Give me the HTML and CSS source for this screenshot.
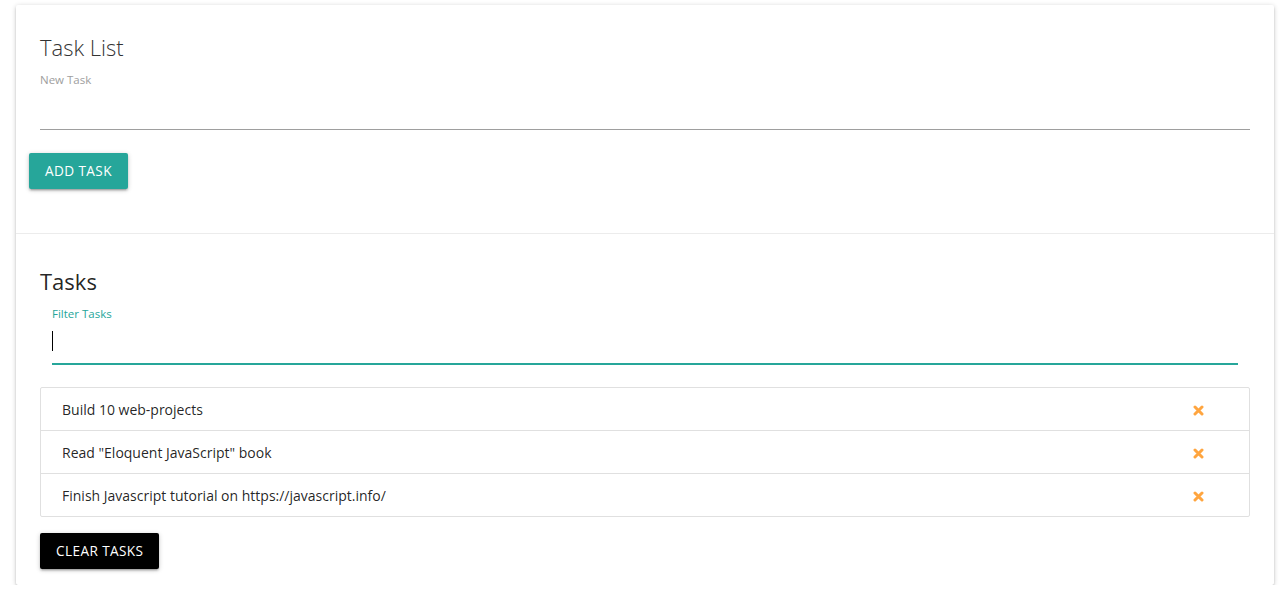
FILE: index.html
```html
<!DOCTYPE html>
<html>
<head>
<meta charset="utf-8">
<link rel="stylesheet" href="styles.css">
</head>
<body>
<div class="page">
  <div class="card">
    <div class="card-content">
      <span class="card-title">Task List</span>
      <div class="field">
        <label class="label">New Task</label>
        <div class="input"></div>
      </div>
      <button class="btn btn-teal">Add Task</button>
    </div>
    <div class="card-action">
      <h5 class="heading">Tasks</h5>
      <div class="field field-filter">
        <label class="label label-active">Filter Tasks</label>
        <div class="input input-active"><span class="caret"></span></div>
      </div>
      <ul class="collection">
        <li class="item"><span>Build 10 web-projects</span><a class="delete"><svg width="11" height="11" viewBox="0 0 11 11"><path d="M2 2 L9 9 M9 2 L2 9" stroke="#ffa53f" stroke-width="3" stroke-linecap="round"/></svg></a></li>
        <li class="item"><span>Read "Eloquent JavaScript" book</span><a class="delete"><svg width="11" height="11" viewBox="0 0 11 11"><path d="M2 2 L9 9 M9 2 L2 9" stroke="#ffa53f" stroke-width="3" stroke-linecap="round"/></svg></a></li>
        <li class="item"><span>Finish Javascript tutorial on https://javascript.info/</span><a class="delete"><svg width="11" height="11" viewBox="0 0 11 11"><path d="M2 2 L9 9 M9 2 L2 9" stroke="#ffa53f" stroke-width="3" stroke-linecap="round"/></svg></a></li>
      </ul>
      <button class="btn btn-black">Clear Tasks</button>
    </div>
  </div>
</div>
</body>
</html>
```

FILE: styles.css
```css
* { box-sizing: border-box; }
html, body { margin: 0; padding: 0; background: #fff; }
body {
  font-family: "Open Sans", "Noto Sans", sans-serif;
  font-size: 14px;
  color: rgba(0,0,0,0.87);
}
.page { padding: 5px 14px 0 16px; }
.card {
  background: #fff;
  border-radius: 2px;
  box-shadow: 0 2px 2px 0 rgba(0,0,0,.14), 0 3px 1px -2px rgba(0,0,0,.12), 0 1px 5px 0 rgba(0,0,0,.2);
}
.card-content { padding: 26px 24px 44px; }
.card-title {
  display: block;
  font-size: 22px;
  font-weight: 300;
  line-height: 32px;
  color: #333;
}
.field { margin-top: 10px; }
.label {
  display: block;
  font-size: 11.5px;
  line-height: 14px;
  color: #9e9e9e;
}
.input {
  height: 43px;
  border-bottom: 1px solid #9e9e9e;
  position: relative;
}
.btn {
  display: block;
  height: 36px;
  line-height: 36px;
  padding: 0 16px;
  border: none;
  border-radius: 2px;
  font-family: inherit;
  font-size: 13.6px;
  letter-spacing: .4px;
  text-transform: uppercase;
  color: #fff;
  box-shadow: 0 2px 2px 0 rgba(0,0,0,.14), 0 3px 1px -2px rgba(0,0,0,.12), 0 1px 5px 0 rgba(0,0,0,.2);
}
.btn-teal { background: #26a69a; margin: 23px 0 0 -11px; }
.btn-black { background: #000; margin-top: 16px; }
.card-action {
  border-top: 1px solid rgba(160,160,160,.2);
  padding: 16px 24px 16px;
}
.heading {
  margin: 18px 0 0;
  font-size: 22px;
  font-weight: 400;
  line-height: 26px;
  color: rgba(0,0,0,0.87);
}
.field-filter { margin: 13px 12px 0; }
.label-active { color: #26a69a; }
.input-active {
  height: 43px;
  border-bottom: 1px solid #26a69a;
  box-shadow: 0 1px 0 0 #26a69a;
}
.caret {
  position: absolute;
  left: 0;
  top: 10px;
  width: 1px;
  height: 20px;
  background: #000;
}
.collection {
  list-style: none;
  margin: 23px 0 0;
  padding: 0;
  border: 1px solid #e0e0e0;
  border-radius: 2px;
}
.item {
  display: flex;
  align-items: center;
  justify-content: space-between;
  padding: 11px 45px 9px 21px;
  line-height: 22px;
  border-bottom: 1px solid #e0e0e0;
}
.item:last-child { border-bottom: none; }
.delete { display: flex; }
```
